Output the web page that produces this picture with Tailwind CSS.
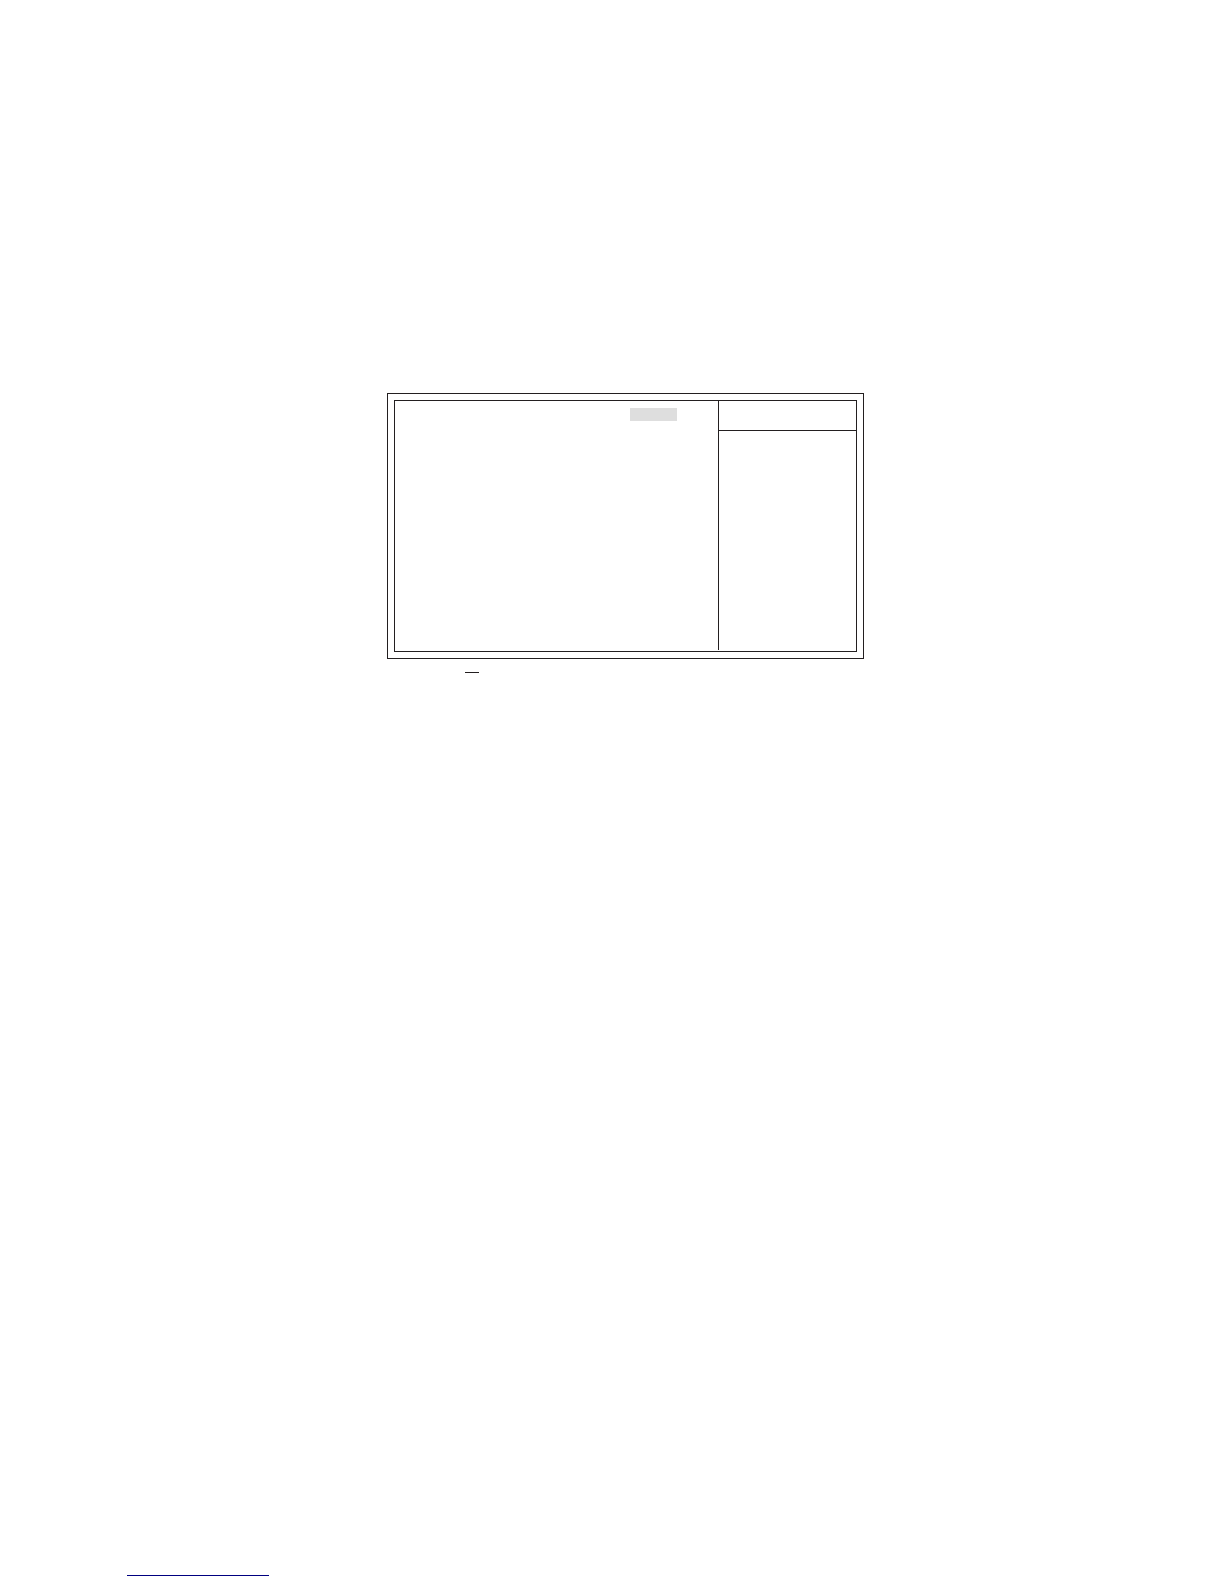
<!DOCTYPE html>
<html lang="en">

<head>
	<meta charset="UTF-8">
	<meta name="viewport" content="width=device-width, initial-scale=1.0">
	<title>Setup screen</title>
	<script src="https://cdn.jsdelivr.net/npm/@tailwindcss/browser@4"></script>
</head>

<body class="bg-white min-h-screen flex flex-col">
	<main class="pt-[393px] pl-[387px] pr-[360px]">
		<!-- double frame -->
		<div class="border border-[#231f20] p-1.5">
			<div class="border border-[#231f20] pb-px flex">
				<!-- options -->
				<section class="flex-1 min-h-[249px] pt-[7px] pr-[41px] flex justify-end items-start">
					<div class="w-[47px] h-[13px] bg-[#dedede]"></div>
				</section>

				<!-- help -->
				<aside class="w-[138px] border-l border-[#231f20]">
					<div class="h-[30px] border-b border-[#231f20]"></div>
				</aside>
			</div>
		</div>

		<hr class="mt-[13px] ml-[78px] w-3.5 border-[#231f20]">
	</main>

	<footer class="mt-auto pb-2 pl-[127px]">
		<hr class="w-[142px] border-[#000080]">
	</footer>
</body>

</html>
